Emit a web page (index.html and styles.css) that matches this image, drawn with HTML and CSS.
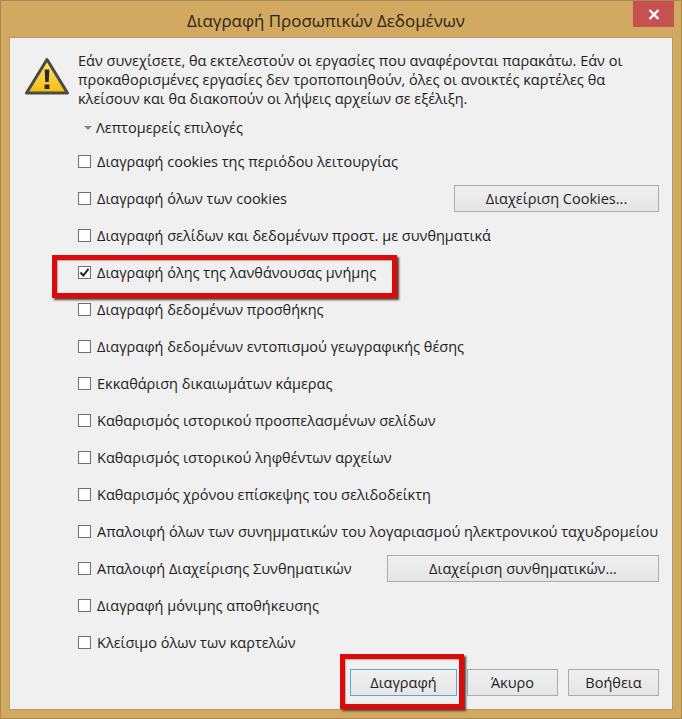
FILE: index.html
```html
<!DOCTYPE html>
<html lang="el">
<head>
<meta charset="utf-8">
<title>Διαγραφή Προσωπικών Δεδομένων</title>
<link rel="stylesheet" href="styles.css">
</head>
<body>
<div class="window">
  <header class="titlebar">
    <h1 class="title">Διαγραφή Προσωπικών Δεδομένων</h1>
    <div class="close"><svg width="12" height="11" viewBox="0 0 12 11"><path d="M1.5 1L10.5 10M10.5 1L1.5 10" stroke="#fff" stroke-width="2.4" fill="none"/></svg></div>
  </header>
  <main class="client">
    <section class="intro">
      <svg class="warn" width="46" height="40" viewBox="0 0 46 40">
        <defs><linearGradient id="wg" x1="0" y1="0" x2="0" y2="1"><stop offset="0" stop-color="#ffe97a"/><stop offset="1" stop-color="#f7b90f"/></linearGradient></defs>
        <path d="M23 2.5L43.5 36H2.5Z" fill="url(#wg)" stroke="#4a4a44" stroke-width="3" stroke-linejoin="round"/>
        <path d="M20.6 12.5h4.8l-.7 12.5h-3.400zM20.600 27.500h4.800v4.500h-4.800z" fill="#2a2a22"/>
      </svg>
      <p class="message">Εάν συνεχίσετε, θα εκτελεστούν οι εργασίες που αναφέρονται παρακάτω. Εάν οι προκαθορισμένες εργασίες δεν τροποποιηθούν, όλες οι ανοικτές καρτέλες θα κλείσουν και θα διακοπούν οι λήψεις αρχείων σε εξέλιξη.</p>
    </section>
    <div class="details"><span class="caret"></span>Λεπτομερείς επιλογές</div>
    <div class="options">
      <label class="row"><span class="check"></span>Διαγραφή cookies της περιόδου λειτουργίας</label>
      <div class="row"><span class="check"></span><span class="grow">Διαγραφή όλων των cookies</span><button class="btn btn-cookies">Διαχείριση Cookies...</button></div>
      <label class="row"><span class="check"></span>Διαγραφή σελίδων και δεδομένων προστ. με συνθηματικά</label>
      <label class="row"><span class="check checked"><svg width="11" height="11" viewBox="0 0 11 11"><path d="M1.500 5.500L4.300 8.500L9.500 1.800" stroke="#222" stroke-width="2" fill="none"/></svg></span>Διαγραφή όλης της λανθάνουσας μνήμης</label>
      <label class="row"><span class="check"></span>Διαγραφή δεδομένων προσθήκης</label>
      <label class="row"><span class="check"></span>Διαγραφή δεδομένων εντοπισμού γεωγραφικής θέσης</label>
      <label class="row"><span class="check"></span>Εκκαθάριση δικαιωμάτων κάμερας</label>
      <label class="row"><span class="check"></span>Καθαρισμός ιστορικού προσπελασμένων σελίδων</label>
      <label class="row"><span class="check"></span>Καθαρισμός ιστορικού ληφθέντων αρχείων</label>
      <label class="row"><span class="check"></span>Καθαρισμός χρόνου επίσκεψης του σελιδοδείκτη</label>
      <label class="row"><span class="check"></span>Απαλοιφή όλων των συνημματικών του λογαριασμού ηλεκτρονικού ταχυδρομείου</label>
      <div class="row"><span class="check"></span><span class="grow">Απαλοιφή Διαχείρισης Συνθηματικών</span><button class="btn btn-passwords">Διαχείριση συνθηματικών...</button></div>
      <label class="row"><span class="check"></span>Διαγραφή μόνιμης αποθήκευσης</label>
      <label class="row"><span class="check"></span>Κλείσιμο όλων των καρτελών</label>
    </div>
    <footer class="actions">
      <button class="btn btn-action btn-primary">Διαγραφή</button>
      <button class="btn btn-action btn-cancel">Άκυρο</button>
      <button class="btn btn-action btn-help">Βοήθεια</button>
    </footer>
    <div class="mark mark-cache"></div>
    <div class="mark mark-delete"></div>
  </main>
</div>
</body>
</html>
```
FILE: styles.css
```css
* { box-sizing: border-box; }
html, body { margin: 0; padding: 0; }
body {
  width: 682px;
  height: 719px;
  overflow: hidden;
  font-family: "Open Sans", "Noto Sans", sans-serif;
  font-size: 14.5px;
  color: #222;
}
.window {
  width: 682px;
  height: 719px;
  display: flex;
  flex-direction: column;
  background: #d2a961;
  border: 1px solid #a98a4e;
  padding: 0 8px 8px;
}
.titlebar {
  height: 36px;
  flex: none;
  display: flex;
  position: relative;
  justify-content: center;
  padding-right: 30px;
}
.title {
  margin: 9px 0 0;
  font-size: 16.9px;
  font-weight: 400;
  line-height: 22px;
  color: #2b2416;
}
.close {
  position: absolute;
  top: 0;
  right: -1px;
  width: 41px;
  height: 26px;
  background: #c75050;
  display: flex;
  align-items: center;
  justify-content: center;
}
.client {
  flex: 1;
  position: relative;
  background: #f0f0f0;
  border: 1px solid #b49a66;
  padding: 0 13px 0 0;
  display: flex;
  flex-direction: column;
}
.intro {
  display: flex;
  height: 72px;
  padding-top: 13px;
}
.warn { margin: 6px 0 0 14px; flex: none; }
.message {
  margin: 0 0 0 8px;
  line-height: 19px;
  width: 550px;
}
.details {
  height: 33px;
  padding-top: 2px;
  margin-left: 74px;
  display: flex;
  align-items: center;
}
.caret {
  width: 0;
  height: 0;
  border-left: 4px solid transparent;
  border-right: 4px solid transparent;
  border-top: 4px solid #888;
  margin-right: 4px;
}
.row {
  height: 37px;
  display: flex;
  align-items: center;
  padding-left: 68px;
  white-space: nowrap;
}
.grow { flex: 1; }
.check {
  width: 13px;
  height: 13px;
  flex: none;
  margin-right: 6px;
  background: #fff;
  border: 1px solid #707070;
  display: flex;
  align-items: center;
  justify-content: center;
}
.btn {
  height: 27px;
  padding: 0;
  font: inherit;
  color: #222;
  background: linear-gradient(#f0f0f0, #e5e5e5);
  border: 1px solid #acacac;
  flex: none;
}
.btn-cookies { width: 205px; }
.btn-passwords { width: 272px; }
.actions {
  display: flex;
  justify-content: flex-end;
  gap: 10px;
  margin-top: 8px;
}
.btn-action { width: 91px; }
.btn-primary { width: 107px; border-color: #5fa5d8; }
.mark {
  position: absolute;
  border: 5px solid #dc0a0a;
  box-shadow: 2px 2px 2px #5a3a30, inset 1px 1px 1px rgba(90, 40, 30, .35);
}
.mark-cache { left: 42px; top: 217px; width: 345px; height: 43px; }
.mark-delete { left: 330px; top: 616px; width: 124px; height: 55px; }
```
